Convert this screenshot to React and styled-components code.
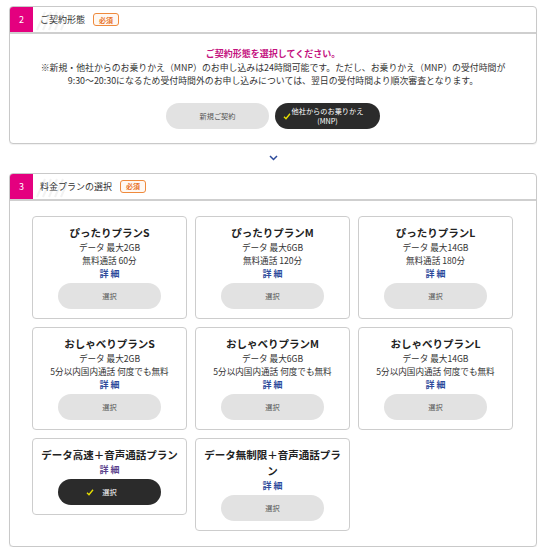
import React from "react";
import styled, { createGlobalStyle } from "styled-components";

const Global = createGlobalStyle`
  html, body { margin: 0; padding: 0; background: #fff; }
  body { font-family: "Noto Sans CJK JP", "Noto Sans", sans-serif; color: #333; }
  * { box-sizing: border-box; }
`;

const Page = styled.div`
  width: 541px;
  padding: 6px 4px 0 9px;
  display: flex;
  flex-direction: column;
`;

const Section = styled.section`
  width: 528px;
  border: 1px solid #c9c9c9;
  border-radius: 4px;
  background: #fff;
  box-shadow: 0 1px 1px rgba(0,0,0,0.06);
  overflow: hidden;
`;

const Header = styled.div`
  display: flex;
  align-items: center;
  height: 27px;
  border-bottom: 2px solid #cfcfcf;
  position: relative;
`;

const Num = styled.div`
  width: 23px;
  align-self: stretch;
  background: #e4007f;
  color: #fff;
  font-size: 9px;
  display: flex;
  align-items: center;
  justify-content: center;
`;

const Stripes = styled.svg`
  position: absolute;
  left: 23px;
  top: 2px;
`;

const Title = styled.div`
  margin-left: 7px;
  font-size: 9px;
  color: #333;
  position: relative;
`;

const Badge = styled.span`
  margin-left: 8px;
  display: inline-flex;
  align-items: center;
  justify-content: center;
  height: 13px;
  padding: 0 5px;
  border: 1px solid #ef8a3c;
  border-radius: 3px;
  background: #fff8f2;
  color: #e8742a;
  font-size: 7px;
  font-weight: 700;
`;

const Body = styled.div`
  padding: 13px 10px 14px;
  display: flex;
  flex-direction: column;
  align-items: center;
`;

const Lead = styled.p`
  margin: 0;
  font-size: 9px;
  line-height: 13.5px;
  font-weight: 700;
  color: #c4127f;
  text-align: center;
`;

const Note = styled.p`
  margin: 0;
  font-size: 8.9px;
  line-height: 13.5px;
  color: #333;
  text-align: center;
`;

const ChoiceRow = styled.div`
  margin-top: 15px;
  display: flex;
  gap: 6px;
`;

const Pill = styled.button`
  position: relative;
  width: ${(p) => p.$w || 103}px;
  height: 26px;
  border: none;
  border-radius: 13px;
  background: ${(p) => (p.$on ? "#2b2b2b" : "#e2e2e2")};
  color: ${(p) => (p.$on ? "#fff" : "#555")};
  font-family: inherit;
  font-size: 7.2px;
  line-height: 10px;
  display: flex;
  flex-direction: column;
  align-items: center;
  justify-content: center;
  padding: 0;
  cursor: pointer;
`;

const Check = styled.svg`
  position: absolute;
  left: ${(p) => p.$left}px;
  top: 50%;
  margin-top: -3px;
`;

const Chevron = styled.div`
  height: 29px;
  display: flex;
  align-items: center;
  justify-content: center;
`;

const Grid = styled.div`
  display: grid;
  grid-template-columns: repeat(3, 155px);
  gap: 8px;
  align-items: start;
  padding: 15px 0 15px 22px;
`;

const Card = styled.div`
  border: 1px solid #cdcdcd;
  border-radius: 4px;
  padding: 8px 5px 9px;
  display: flex;
  flex-direction: column;
  align-items: center;
  text-align: center;
`;

const CardTitle = styled.div`
  font-size: 10.5px;
  line-height: 16px;
  font-weight: 700;
  color: #222;
`;

const Line = styled.div`
  font-size: 8.6px;
  line-height: 13px;
  color: #333;
`;

const Detail = styled.a`
  font-size: 9px;
  line-height: 13px;
  font-weight: 700;
  letter-spacing: 2px;
  margin-right: -2px;
  color: ${(p) => (p.$visited ? "#5b3f8c" : "#2c4a9b")};
  text-decoration: none;
`;

const CardBtnWrap = styled.div`
  margin-top: 3px;
`;

const CheckIcon = ({ left }) => (
  <Check $left={left} width="8" height="7" viewBox="0 0 8 7">
    <path d="M1 3.8 L3 5.8 L7 0.8" fill="none" stroke="#e8e000" strokeWidth="1.4" />
  </Check>
);

const plans = [
  { t: "ぴったりプランS", l: ["データ 最大2GB", "無料通話 60分"] },
  { t: "ぴったりプランM", l: ["データ 最大6GB", "無料通話 120分"] },
  { t: "ぴったりプランL", l: ["データ 最大14GB", "無料通話 180分"] },
  { t: "おしゃべりプランS", l: ["データ 最大2GB", "5分以内国内通話 何度でも無料"] },
  { t: "おしゃべりプランM", l: ["データ 最大6GB", "5分以内国内通話 何度でも無料"] },
  { t: "おしゃべりプランL", l: ["データ 最大14GB", "5分以内国内通話 何度でも無料"] },
  { t: "データ高速＋音声通話プラン", l: [], on: true },
  { t: "データ無制限＋音声通話プラン", l: [] },
];

const SectionHeader = ({ n, title }) => (
  <Header>
    <Num>{n}</Num>
    <Stripes width="34" height="22" viewBox="0 0 34 22">
      {[0, 6, 12, 18, 24].map((x) => (
        <line key={x} x1={x + 4} y1="21" x2={x + 12} y2="3" stroke="#f2f2f2" strokeWidth="2" />
      ))}
    </Stripes>
    <Title>{title}</Title>
    <Badge>必須</Badge>
  </Header>
);

export default function App() {
  return (
    <Page>
      <Global />
      <Section>
        <SectionHeader n="2" title="ご契約形態" />
        <Body>
          <Lead>ご契約形態を選択してください。</Lead>
          <Note>※新規・他社からのお乗りかえ（MNP）のお申し込みは24時間可能です。ただし、お乗りかえ（MNP）の受付時間が</Note>
          <Note>9:30〜20:30になるため受付時間外のお申し込みについては、翌日の受付時間より順次審査となります。</Note>
          <ChoiceRow>
            <Pill>新規ご契約</Pill>
            <Pill $on $w={105}>
              <CheckIcon left={8} />
              <span>他社からのお乗りかえ</span>
              <span>(MNP)</span>
            </Pill>
          </ChoiceRow>
        </Body>
      </Section>
      <Chevron>
        <svg width="9" height="6" viewBox="0 0 9 6">
          <path d="M1 1 L4.5 4.5 L8 1" fill="none" stroke="#2c4a9b" strokeWidth="1.5" />
        </svg>
      </Chevron>
      <Section>
        <SectionHeader n="3" title="料金プランの選択" />
        <Grid>
          {plans.map((p, i) => (
            <Card key={i}>
              <CardTitle>{p.t}</CardTitle>
              {p.l.map((x) => (
                <Line key={x}>{x}</Line>
              ))}
              <Detail href="#" $visited={p.on}>詳細</Detail>
              <CardBtnWrap>
                <Pill $on={p.on}>
                  {p.on && <CheckIcon left={28} />}
                  選択
                </Pill>
              </CardBtnWrap>
            </Card>
          ))}
        </Grid>
      </Section>
    </Page>
  );
}
